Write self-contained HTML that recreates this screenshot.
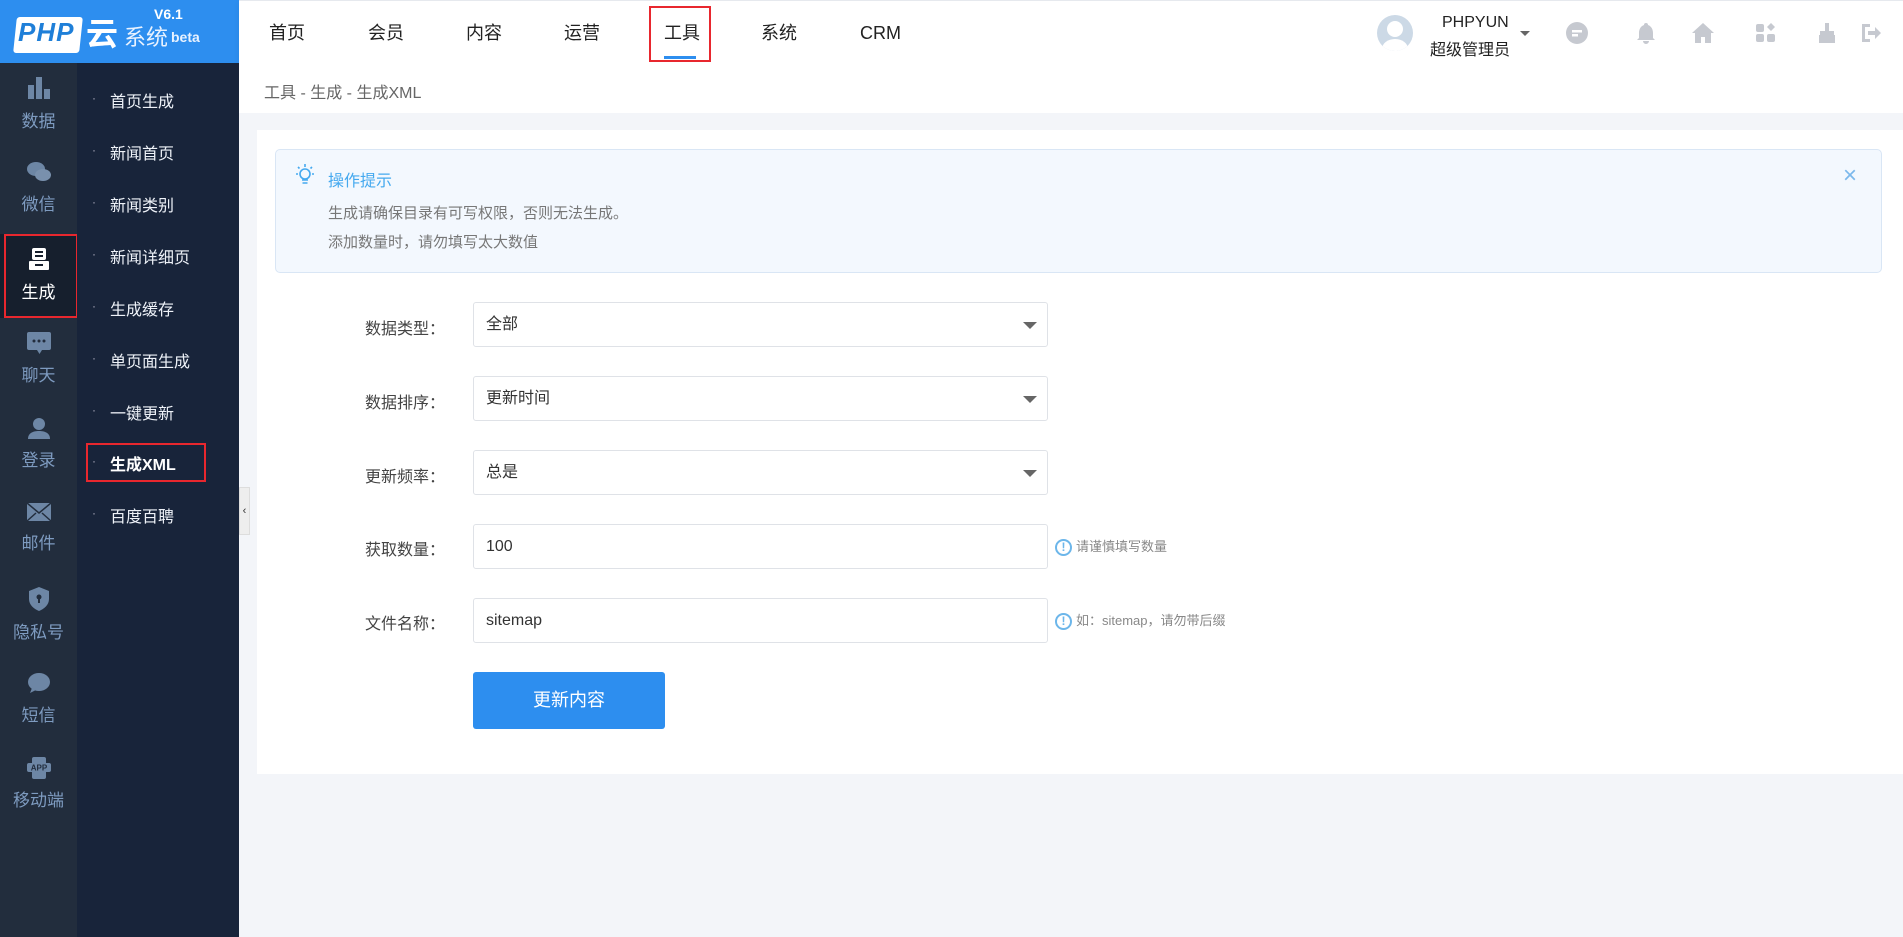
<!DOCTYPE html>
<html><head><meta charset="utf-8"><style>
*{margin:0;padding:0;box-sizing:border-box}
body{width:1903px;height:937px;overflow:hidden;background:#f3f5f9;font-family:"Liberation Sans","Noto Sans CJK SC",sans-serif;position:relative}
.abs{position:absolute}
#logo{left:0;top:0;width:239px;height:63px;background:#2d8eef}
#top{left:239px;top:0;width:1664px;height:63px;background:#fff;box-shadow:0 2px 6px rgba(0,0,0,.06);border-top:1px solid #e6e9ee}
.nav{position:absolute;top:20px;font-size:18px;line-height:24px;height:24px;color:#222}
#side1{left:0;top:63px;width:77px;height:874px;background:#222d3d}
#side2{left:77px;top:63px;width:162px;height:874px;background:#18243a}
.si{position:absolute;left:0;width:77px;height:84px;text-align:center;color:#7e9bc0;font-size:17px;white-space:nowrap}
.si svg{display:block;margin:12px auto 6px}
.sm{position:absolute;left:110px;font-size:16px;color:#eef2f8;white-space:nowrap}
.dot{position:absolute;left:92px;color:#aab;font-size:12px}
#bc{left:239px;top:63px;width:1664px;height:50px;background:#fff}
#card{left:257px;top:130px;width:1646px;height:644px;background:#fff}
#tip{left:275px;top:149px;width:1607px;height:124px;background:#f3f8fe;border:1px solid #d9e6f5;border-radius:5px}
.lab{position:absolute;left:365px;font-size:16px;color:#444;white-space:nowrap}
.inp{position:absolute;left:473px;width:575px;height:45px;border:1px solid #dfe2e7;border-radius:3px;background:#fff;font-size:16px;color:#333;padding:12px 12px;line-height:20px}
.car{position:absolute;right:10px;top:19px;border-left:7px solid transparent;border-right:7px solid transparent;border-top:7px solid #666}
.hint{position:absolute;left:1055px;font-size:13px;color:#888;white-space:nowrap}
.hint i{display:inline-block;width:17px;height:17px;border:2px solid #6cb6ea;border-radius:50%;color:#6cb6ea;font-style:normal;font-weight:bold;font-size:12px;text-align:center;line-height:13px;vertical-align:middle;margin-right:4px}
.ti{position:absolute;top:19px;width:26px;height:26px}
</style></head><body>
<div id="logo" class="abs">
 <div class="abs" style="left:15px;top:17px;width:66px;height:36px;background:#fff;border-radius:3px;transform:skewX(-6deg)"></div>
 <div class="abs" style="left:18px;top:17px;font:italic bold 26px 'Liberation Sans',sans-serif;color:#1f7fd8;letter-spacing:1px">PHP</div>
 <div class="abs" style="left:86px;top:12px;font:bold 32px 'Noto Sans CJK SC',sans-serif;color:#fff;line-height:40px">云</div>
 <div class="abs" style="left:124px;top:20px;font-size:22px;color:#e8f2ff">系统</div>
 <div class="abs" style="left:154px;top:6px;font-size:14px;color:#fff;font-weight:bold">V6.1</div>
 <div class="abs" style="left:171px;top:29px;font-size:14px;color:#e8f2ff;font-weight:bold">beta</div>
</div>
<div id="top" class="abs">
 <span class="nav" style="left:30px">首页</span><span class="nav" style="left:129px">会员</span><span class="nav" style="left:227px">内容</span><span class="nav" style="left:325px">运营</span><span class="nav" style="left:425px">工具</span><span class="nav" style="left:522px">系统</span><span class="nav" style="left:621px">CRM</span>
 <div class="abs" style="left:410px;top:5px;width:62px;height:56px;border:2px solid #e8272e"></div>
 <div class="abs" style="left:425px;top:55px;width:32px;height:3px;background:#2d8eef"></div>
 <div class="abs" style="left:1138px;top:14px;width:36px;height:36px;border-radius:50%;background:#ccd9e6;overflow:hidden"><div class="abs" style="left:10px;top:6px;width:16px;height:16px;border-radius:50%;background:#fff"></div><div class="abs" style="left:5px;top:24px;width:26px;height:20px;border-radius:50%;background:#fff"></div></div>
 <div class="abs" style="left:1203px;top:13px;font-size:16px;color:#222">PHPYUN</div>
 <div class="abs" style="left:1191px;top:35px;font-size:16px;color:#222;white-space:nowrap">超级管理员</div>
 <div class="abs" style="left:1281px;top:30px;border-left:5px solid transparent;border-right:5px solid transparent;border-top:5px solid #666"></div>
 <svg class="ti" style="left:1325px" viewBox="0 0 26 26"><circle cx="13" cy="13" r="11" fill="#c6c9d0"/><rect x="8" y="10" width="10" height="2.5" fill="#fff"/><rect x="8" y="14" width="6" height="2.5" fill="#fff"/></svg>
 <svg class="ti" style="left:1394px" viewBox="0 0 26 26"><path d="M13 3a2 2 0 0 1 2 2c3 1 5 4 5 8v5l2 2H4l2-2v-5c0-4 2-7 5-8a2 2 0 0 1 2-2zM10 21h6a3 3 0 0 1-6 0z" fill="#c6c9d0"/></svg>
 <svg class="ti" style="left:1451px" viewBox="0 0 26 26"><path d="M13 3L2 13h3v10h6v-6h4v6h6V13h3z" fill="#c6c9d0"/></svg>
 <svg class="ti" style="left:1514px" viewBox="0 0 26 26"><rect x="3" y="4" width="8" height="8" rx="2" fill="#c6c9d0"/><rect x="3" y="14" width="8" height="8" rx="2" fill="#c6c9d0"/><rect x="14" y="14" width="8" height="8" rx="2" fill="#c6c9d0"/><path d="M18 3l4 4-4 4-4-4z" fill="#c6c9d0"/></svg>
 <svg class="ti" style="left:1575px" viewBox="0 0 26 26"><rect x="11" y="3" width="4" height="8" fill="#c6c9d0"/><rect x="6" y="11" width="14" height="4" fill="#c6c9d0"/><path d="M5 15h16v8H5z" fill="#c6c9d0"/></svg>
 <svg class="ti" style="left:1619px" viewBox="0 0 26 26"><path d="M4 4h8v3H7v12h5v3H4z" fill="#c6c9d0"/><path d="M10 11h7V7l6 6-6 6v-4h-7z" fill="#c6c9d0"/></svg>
</div>
<div id="side1" class="abs">
 <div class="si" style="top:0"><svg width="24" height="26" viewBox="0 0 24 26"><rect x="1" y="10" width="6" height="14" fill="#6d86a5"/><rect x="9" y="2" width="6" height="22" fill="#6d86a5"/><rect x="17" y="14" width="6" height="10" fill="#6d86a5"/></svg>数据</div>
 <div class="si" style="top:85px"><svg width="26" height="24" viewBox="0 0 26 24"><ellipse cx="10" cy="9" rx="9" ry="7" fill="#6d86a5"/><ellipse cx="17" cy="15" rx="8" ry="6" fill="#7990ad"/></svg>微信</div>
 <div class="si" style="top:171px;background:#161f2d;color:#fff"><svg width="24" height="26" viewBox="0 0 24 26"><rect x="5" y="2" width="14" height="12" rx="2" fill="#fff"/><rect x="8" y="5" width="8" height="2" fill="#161f2d"/><rect x="8" y="9" width="8" height="2" fill="#161f2d"/><rect x="2" y="15" width="20" height="9" rx="1" fill="#fff"/><rect x="8" y="18" width="8" height="2" fill="#161f2d"/></svg>生成</div>
 <div class="abs" style="left:4px;top:171px;width:74px;height:84px;border:2px solid #e8272e"></div>
 <div class="si" style="top:256px"><svg width="26" height="24" viewBox="0 0 26 24"><rect x="1" y="1" width="24" height="18" rx="2" fill="#6d86a5"/><path d="M11 19h5l-2.5 4z" fill="#6d86a5"/><circle cx="8" cy="10" r="1.5" fill="#222d3d"/><circle cx="13" cy="10" r="1.5" fill="#222d3d"/><circle cx="18" cy="10" r="1.5" fill="#222d3d"/></svg>聊天</div>
 <div class="si" style="top:341px"><svg width="24" height="24" viewBox="0 0 24 24"><circle cx="12" cy="8" r="6" fill="#6d86a5"/><path d="M1 23c0-6 5-8 11-8s11 2 11 8z" fill="#6d86a5"/></svg>登录</div>
 <div class="si" style="top:426px"><svg width="26" height="22" viewBox="0 0 26 22"><rect x="1" y="2" width="24" height="18" fill="#6d86a5"/><path d="M1 2l12 10 12-10M1 20l9-8M25 20l-9-8" stroke="#222d3d" stroke-width="1.5" fill="none"/></svg>邮件</div>
 <div class="si" style="top:511px"><svg width="22" height="26" viewBox="0 0 22 26"><path d="M11 1l10 4v8c0 6-5 10-10 12C6 23 1 19 1 13V5z" fill="#6d86a5"/><circle cx="11" cy="11" r="2.5" fill="#222d3d"/><rect x="10" y="12" width="2" height="5" fill="#222d3d"/></svg>隐私号</div>
 <div class="si" style="top:596px"><svg width="24" height="24" viewBox="0 0 24 24"><ellipse cx="12" cy="11" rx="11" ry="9" fill="#6d86a5"/><path d="M5 17l-2 5 6-3z" fill="#6d86a5"/></svg>短信</div>
 <div class="si" style="top:681px"><svg width="26" height="24" viewBox="0 0 26 24"><rect x="6" y="1" width="14" height="22" rx="2" fill="#6d86a5"/><rect x="1" y="7" width="24" height="9" rx="2" fill="#6d86a5"/><text x="13" y="14.5" font-size="8" font-weight="bold" text-anchor="middle" fill="#222d3d" font-family="Liberation Sans">APP</text></svg>移动端</div>
</div>
<div id="side2" class="abs"></div>
<div class="abs" style="left:0;top:0;width:239px;height:937px">
 <span class="dot" style="top:91px">·</span><span class="sm" style="top:88px">首页生成</span>
 <span class="dot" style="top:143px">·</span><span class="sm" style="top:140px">新闻首页</span>
 <span class="dot" style="top:195px">·</span><span class="sm" style="top:192px">新闻类别</span>
 <span class="dot" style="top:247px">·</span><span class="sm" style="top:244px">新闻详细页</span>
 <span class="dot" style="top:299px">·</span><span class="sm" style="top:296px">生成缓存</span>
 <span class="dot" style="top:351px">·</span><span class="sm" style="top:348px">单页面生成</span>
 <span class="dot" style="top:403px">·</span><span class="sm" style="top:400px">一键更新</span>
 <span class="dot" style="top:454px">·</span><span class="sm" style="top:451px;font-weight:bold;color:#fff">生成XML</span>
 <span class="dot" style="top:506px">·</span><span class="sm" style="top:503px">百度百聘</span>
</div>
<div class="abs" style="left:86px;top:443px;width:120px;height:39px;border:2px solid #e8272e"></div>
<div class="abs" style="left:239px;top:487px;width:11px;height:48px;background:#eee;border:1px solid #ddd;font-size:11px;color:#333;text-align:center;line-height:46px">‹</div>
<div id="bc" class="abs"><span class="abs" style="left:25px;top:16px;font-size:16px;color:#666;white-space:nowrap">工具 - 生成 - 生成XML</span></div>
<div id="card" class="abs"></div>
<div id="tip" class="abs">
 <svg class="abs" style="left:16px;top:12px" width="26" height="26" viewBox="0 0 26 26" fill="none" stroke="#45a9ef" stroke-width="1.6"><circle cx="13" cy="12" r="5"/><path d="M10 18h6M10.5 21h5M13 2v3M4 12h2M20 12h2M6 5l1.5 1.5M20 5l-1.5 1.5"/></svg>
 <span class="abs" style="left:52px;top:17px;font-size:16px;color:#45a9ef">操作提示</span>
 <span class="abs" style="left:52px;top:52px;font-size:15px;color:#777;white-space:nowrap">生成请确保目录有可写权限，否则无法生成。</span>
 <span class="abs" style="left:52px;top:81px;font-size:15px;color:#777;white-space:nowrap">添加数量时，请勿填写太大数值</span>
 <span class="abs" style="left:1567px;top:12px;font-size:24px;color:#7bb8ec">×</span>
</div>
<span class="lab" style="top:315px">数据类型：</span><div class="inp" style="top:302px">全部<div class="car"></div></div>
<span class="lab" style="top:389px">数据排序：</span><div class="inp" style="top:376px">更新时间<div class="car"></div></div>
<span class="lab" style="top:463px">更新频率：</span><div class="inp" style="top:450px">总是<div class="car"></div></div>
<span class="lab" style="top:536px">获取数量：</span><div class="inp" style="top:524px">100</div>
<div class="hint" style="top:536px"><i>!</i>请谨慎填写数量</div>
<span class="lab" style="top:610px">文件名称：</span><div class="inp" style="top:598px">sitemap</div>
<div class="hint" style="top:610px"><i>!</i>如：sitemap，请勿带后缀</div>
<div class="abs" style="left:473px;top:672px;width:192px;height:57px;background:#2d8eef;border-radius:3px;color:#fff;font-size:18px;text-align:center;line-height:57px">更新内容</div>
</body></html>
